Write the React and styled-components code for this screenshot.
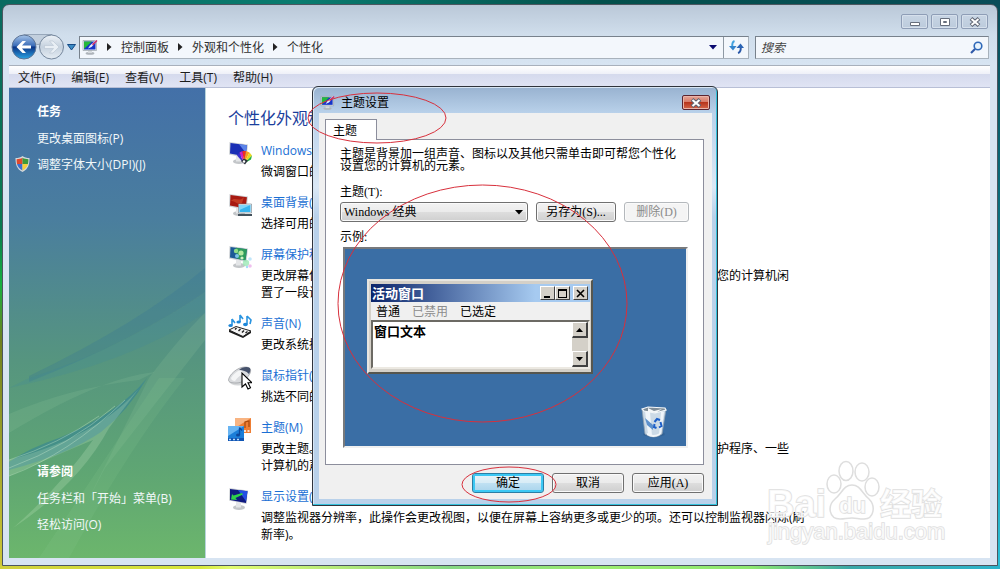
import React from 'react';
import styled, { createGlobalStyle, css } from 'styled-components';

const tasks = [
  { label: '更改桌面图标(P)' },
  { label: '调整字体大小(DPI)(J)', shield: true },
];

const related = ['任务栏和「开始」菜单(B)', '轻松访问(O)'];

const menus = ['文件(F)', '编辑(E)', '查看(V)', '工具(T)', '帮助(H)'];

const crumbs = ['控制面板', '外观和个性化', '个性化'];

const settings = [
  { icon: 'color', title: 'Windows 颜色和外观', lines: ['微调窗口的颜色和样式。'] },
  { icon: 'desktop', title: '桌面背景(B)', lines: ['选择可用的背景或颜色，或者使用自己的图片。'] },
  {
    icon: 'saver',
    title: '屏幕保护程序(S)',
    lines: [
      '更改屏幕保护程序或调整何时显示屏幕保护程序。屏幕保护程序是一幅图片或动画，当您的计算机闲',
      '置了一段设定的时间后显示。',
    ],
  },
  { icon: 'sound', title: '声音(N)', lines: ['更改系统播放的声音。'] },
  { icon: 'mouse', title: '鼠标指针(I)', lines: ['挑选不同的鼠标指针。'] },
  {
    icon: 'theme',
    title: '主题(M)',
    lines: [
      '更改主题。主题可以一次更改一系列可视和听觉元素，包括菜单、图标、背景、屏幕保护程序、一些',
      '计算机的声音和鼠标指针。',
    ],
  },
  {
    icon: 'display',
    title: '显示设置(D)',
    lines: [
      '调整监视器分辨率，此操作会更改视图，以便在屏幕上容纳更多或更少的项。还可以控制监视器闪烁(刷',
      '新率)。',
    ],
  },
];

const MonitorIcon = ({ size }) => (
  <svg width={size} height={size} viewBox="0 0 16 16" aria-hidden="true">
    <ellipse cx="8" cy="14.4" rx="4.4" ry="1.4" fill="#aeb4ba" />
    <path d="M6 11h4v3H6z" fill="#d5d9dd" />
    <path d="M1 1.5h13.5v10H1z" fill="#e9edf0" stroke="#8d959d" strokeWidth=".6" />
    <path d="M2 2.5h11.5v8H2z" fill="#1534c8" />
    <path d="M2 2.5h8L2 10z" fill="#25b83a" />
    <path d="M6 9.5l2-3 6-5.5 1 1-5.500 6z" fill="#e6eef8" />
    <path d="M10 5l4.500-4 1 1L11 6.500z" fill="#c62d6b" />
  </svg>
);

const Screen = ({ children }) => (
  <>
    <ellipse cx="11" cy="20.500" rx="6" ry="2.500" fill="#c3c6c9" />
    <path d="M8 15l5 1v4.500H8z" fill="#e4e6e8" />
    <path d="M1.500 1l18.500 2.500L18.500 17 1 13.500z" fill="#cfd3d7" />
    {children}
  </>
);

const icons = {
  color: (
    <>
      <Screen>
        <path d="M2.500 2l16.500 2.300L17.500 15.500 2 12.500z" fill="#1a2fb5" />
        <path d="M11 3.200l8 1.100-1 8z" fill="#5c84e8" />
      </Screen>
      <path d="M16 22.500l-7-8 2.500-3z" fill="#3a30d0" />
      <path d="M16 22.500l-4.500-11 3-1.500z" fill="#d020c0" />
      <path d="M16 22.500L14.500 10h3.500z" fill="#f03020" />
      <path d="M16 22.500L18 10l3.500 1.500z" fill="#f8a020" />
      <path d="M16 22.500l5.500-11 2.500 3z" fill="#e8d820" />
      <path d="M16 22.500l8-8-1 4z" fill="#20b040" />
      <path d="M13 20l3-2.500 4 2-3 4z" fill="#2e343c" />
      <circle cx="16" cy="20.500" r="1.200" fill="#fff" />
    </>
  ),
  desktop: (
    <>
      <Screen>
        <path d="M2.500 2l16.500 2.300L17.500 15.500 2 12.500z" fill="#a81a12" />
        <path d="M3 8c4-5 8 2 13-4l-2 6c-4 3-7-3-11-2z" fill="#cf4a2c" opacity=".7" />
      </Screen>
      <path d="M10.500 11h13v9h-13z" fill="#e9f3f8" stroke="#70808c" strokeWidth=".6" />
      <path d="M11.500 12h11v7h-11z" fill="#38b4ee" />
      <path d="M11.500 12h11l-11 5z" fill="#80d6fa" />
      <path d="M10 21h14v2H10z" fill="#44525c" />
    </>
  ),
  saver: (
    <>
      <Screen>
        <path d="M2.500 2l16.500 2.300L17.500 15.500 2 12.500z" fill="#1c5a96" />
        <path d="M8 2.800l11 1.500-1.500 11.200L9 13.500z" fill="#2d9a5c" />
        <circle cx="8" cy="6" r="2.200" fill="#8fdc8a" />
        <circle cx="13" cy="8" r="2.600" fill="#b5e9a1" />
        <circle cx="9" cy="11" r="2" fill="#7cc4e8" />
        <circle cx="14" cy="13" r="1.600" fill="#d2f2c4" />
      </Screen>
      <circle cx="18" cy="18" r="3.200" fill="#9be8b5" opacity=".8" />
      <circle cx="22" cy="14" r="1.800" fill="#c0e6fa" />
      <circle cx="22" cy="21" r="1.800" fill="#efbfee" />
      <circle cx="19" cy="22" r="1.200" fill="#a4dcf8" />
    </>
  ),
  sound: (
    <>
      <path d="M4 5v6M4 5l3 4M12 1v7M12 1l3 4M19 2v8M19 2l4 4-1 4" stroke="#2a94e0" strokeWidth="1.600" fill="none" />
      <ellipse cx="2.600" cy="11.500" rx="2.200" ry="1.500" fill="#1c86d8" />
      <ellipse cx="10.600" cy="8" rx="2.200" ry="1.500" fill="#1c86d8" />
      <ellipse cx="17.400" cy="10.500" rx="2.400" ry="1.700" fill="#1c86d8" />
      <path d="M1 16l7-3.500L23 17l-8 5.500z" fill="#f5f5f5" stroke="#222" />
      <path d="M1 16v2l14 6 8-5v-2l-8 5.500z" fill="#1d1d1d" />
      <path d="M7 15.500l1.500-1.500M10.500 17l2-2M14 18.500l2-2M17.500 19l2-1.500" stroke="#222" strokeWidth="1.500" />
    </>
  ),
  mouse: (
    <>
      <ellipse cx="10" cy="15" rx="9" ry="4.500" fill="#d5d7d9" />
      <path d="M.5 14C1 9 9 1 17 1c6 0 7 4 4 8-3 5-7 8-13 8-4 0-7.500-.5-7.500-3z" fill="#d9dbde" stroke="#8a8d92" strokeWidth=".6" />
      <path d="M3 12c2-4 6-7 10-8l3 4c-4 1-7 4-9 7-2 0-4-1-4-3z" fill="#f4f5f6" />
      <path d="M11 4c3-3 8-4 11-2 1 2 0 4-1 6-3-3-6-4-10-4z" fill="#46526c" />
      <path d="M14 7v14l3.500-3 2.500 5 2.500-1.200-2.500-5H24z" fill="#fff" stroke="#000" strokeWidth="1.100" />
    </>
  ),
  theme: (
    <>
      <path d="M7 0h16v15H7z" fill="#ee7e34" />
      <path d="M7 0h16L7 10z" fill="#f8b482" />
      <path d="M17 10V4l4-1v6" stroke="#a8480c" fill="none" strokeWidth="1.200" />
      <path d="M16 13h2M19.500 13h2" stroke="#fff" strokeWidth="1.400" />
      <path d="M0 8h16v15H0z" fill="#1c7ed8" />
      <path d="M0 8h16L0 18z" fill="#68b4f2" />
      <path d="M11.500 9.500V17M11.500 9.500l2.500 3" stroke="#0d479c" fill="none" strokeWidth="1.300" />
      <ellipse cx="10" cy="17" rx="2" ry="1.500" fill="#0d479c" />
      <path d="M0 20h16v3H0z" fill="#0f55b4" />
      <path d="M1 21.500h2M5 21.500h2M9 21.500h2" stroke="#bcdcfa" strokeWidth="1.400" />
    </>
  ),
  display: (
    <Screen>
      <path d="M2 2l17.500 2.300L18 16 2 13z" fill="#101a80" />
      <path d="M10 3l9.500 1.300-1.500 10z" fill="#2450e4" />
      <path d="M3 12.500l1-5.500 1.500 1.500L14 6l1 1.500-7.500 3.500 1.500 2z" fill="#2fd04a" />
    </Screen>
  ),
};

const ShieldIcon = () => (
  <svg width="15" height="16" viewBox="0 0 15 16" aria-hidden="true">
    <path d="M7.500 0c2 1.500 4 2 7 2 0 6-1 11-7 14C1.500 13 .5 8 .5 2c3 0 5-.5 7-2z" fill="#d5d9dc" />
    <path d="M7.500 1.800V8H2c-.3-1.500-.4-3-.4-4.800 2.400 0 4-.4 5.900-1.400z" fill="#e0482c" />
    <path d="M7.500 1.800V8H13c.3-1.500.4-3 .4-4.800-2.400 0-4-.4-5.900-1.400z" fill="#3d9a3a" />
    <path d="M7.500 14.600V8H2c.8 3 2.500 5 5.500 6.600z" fill="#3c6fd0" />
    <path d="M7.500 14.600V8H13c-.8 3-2.500 5-5.500 6.600z" fill="#f6cf3c" />
  </svg>
);

const NavDiscs = () => (
  <svg width="54" height="26" viewBox="0 0 54 26" aria-hidden="true">
    <defs>
      <linearGradient id="blueDisc" x1="0" y1="0" x2="0" y2="1">
        <stop offset="0" stopColor="#a6c4e8" />
        <stop offset=".45" stopColor="#3a6cb8" />
        <stop offset=".5" stopColor="#0b3486" />
        <stop offset="1" stopColor="#2aa4e4" />
      </linearGradient>
      <linearGradient id="paleDisc" x1="0" y1="0" x2="0" y2="1">
        <stop offset="0" stopColor="#eef3f8" />
        <stop offset=".5" stopColor="#c5d1de" />
        <stop offset="1" stopColor="#e6edf4" />
      </linearGradient>
    </defs>
    <path d="M13 .5h28v6q-14 8-28 0z" fill="#c2cfdd" stroke="#97a7ba" />
    <circle cx="13" cy="13" r="12" fill="url(#blueDisc)" stroke="#5e7596" />
    <path d="M5.500 13l6-6h3.500l-4 4.500h9v3h-9l4 4.500h-3.500z" fill="#fff" />
    <circle cx="40.500" cy="13" r="12" fill="url(#paleDisc)" stroke="#74869c" />
    <path d="M48 13l-6-6h-3.500l4 4.500h-9v3h9l-4 4.500H42z" fill="#e9eff5" stroke="#b9c5d2" strokeWidth=".6" />
  </svg>
);

const RecycleBin = () => (
  <svg width="26" height="32" viewBox="0 0 26 32" aria-hidden="true">
    <ellipse cx="13" cy="28" rx="11" ry="3" fill="#2c5788" opacity=".5" />
    <path d="M1 3l3 25q9 6 17 0l4-25z" fill="#ccdae6" stroke="#8ea0b0" strokeWidth=".8" />
    <path d="M4 5l3 23 4 2-2-24zM20 6l-2 23 2-1 3-22z" fill="#eff5fa" />
    <path d="M4 12l8 7v5L6 19z" fill="#5e91cc" />
    <path d="M1 3l6-2 17 1 1 2-11 3-11-2z" fill="#7f8d98" stroke="#f4f8fb" strokeWidth="1.200" />
    <path d="M7 2l6 3 8-2-6 4-8-1z" fill="#f5f7f8" />
    <path d="M13.500 16l2.500-3 3 1M19.500 16l1 4-2.500 1.500M15.500 22l-2.500-1 .5-3" stroke="#1c5fc8" strokeWidth="2" fill="none" />
    <path d="M6 27q7 4 13 0v2q-7 4-13 0z" fill="#f2f6f9" />
  </svg>
);

const Streaks = () => (
  <StreakSvg viewBox="0 0 196 470" preserveAspectRatio="none" aria-hidden="true">
    <path d="M196 180Q130 235 20 288l0 6Q130 250 196 204z" fill="#2f6f9c" opacity=".22" />
    <path d="M196 205Q110 262 20 290L0 300Q120 275 196 225z" fill="#3d86a0" opacity=".2" />
    <path d="M196 225Q170 250 140 290L70 430 96 380 196 252z" fill="#9bd0a0" opacity=".16" />
    <path d="M138 290Q110 325 50 350 20 360 0 374l0 8Q60 366 92 344 120 322 138 290z" fill="#2c7e9a" opacity=".5" />
    <path d="M138 290Q100 345 0 372l0 16Q50 366 84 352 50 400 4 440 70 396 100 340z" fill="#c8ecc4" opacity=".24" />
    <path d="M0 372Q50 356 90 328M0 380Q60 358 106 318M0 388Q60 366 116 312" stroke="#d5f0d4" opacity=".35" fill="none" />
    <path d="M0 326Q60 300 130 292L146 284Q90 290 0 345z" fill="#a5d8a8" opacity=".14" />
    <path d="M176 290Q120 360 60 470L30 470Q90 380 150 290z" fill="#8fcf98" opacity=".14" />
  </StreakSvg>
);

const Watermark = () => (
  <WatermarkSvg viewBox="0 0 182 90" role="img" aria-label="Baidu 经验">
    <g fill="#fff" fillOpacity=".75" stroke="#dedede" strokeWidth="1.500">
      <ellipse cx="68" cy="25" rx="7" ry="9" />
      <ellipse cx="80" cy="12" rx="7" ry="9.500" />
      <ellipse cx="96" cy="13" rx="7" ry="9" />
      <ellipse cx="106" cy="28" rx="7" ry="9" />
      <path d="M86 26c8 0 10 8 17 14 7 7 5 20-5 20-6 0-7-1-12-1s-7 1-12 1c-11 0-13-13-5-20 7-6 9-14 17-14z" />
      <WatermarkText x="1" y="58" $size={38}>Bai</WatermarkText>
      <WatermarkText x="73" y="54" $size={22}>du</WatermarkText>
      <WatermarkText x="114" y="56" $size={31}>经验</WatermarkText>
      <WatermarkText x="2" y="80" $size={22} $light>jingyan.baidu.com</WatermarkText>
    </g>
  </WatermarkSvg>
);

const App = () => (
  <Desktop>
    <GlobalStyle />
    <Window>
      <TitleBar>
        <FrameButton aria-label="最小化">
          <svg width="12" height="12" viewBox="0 0 12 12"><path d="M1.500 6.500h9v3h-9z" fill="#fff" stroke="#666e7c" /></svg>
        </FrameButton>
        <FrameButton aria-label="最大化">
          <svg width="12" height="12" viewBox="0 0 12 12"><path d="M1.500 2.500h9v7h-9z" fill="#fff" stroke="#666e7c" /><path d="M4.500 5.500h3v1h-3z" fill="#fff" stroke="#666e7c" /></svg>
        </FrameButton>
        <FrameButton aria-label="关闭">
          <CloseGlyph />
        </FrameButton>
      </TitleBar>

      <NavRow>
        <NavButton aria-label="后退和前进">
          <NavDiscs />
        </NavButton>
        <NavButton aria-label="最近的页面">
          <svg width="9" height="8" viewBox="0 0 9 8"><path d="M.5 1.500h8L4.500 7z" fill="#3b8bc4" stroke="#174a86" /></svg>
        </NavButton>
        <AddressBar>
          <MonitorIcon size={16} />
          {crumbs.map((crumb) => (
            <Crumb key={crumb}>
              <svg width="5" height="8" viewBox="0 0 5 8" aria-hidden="true"><path d="M0 0l4.500 4L0 8z" fill="#222" /></svg>
              <CrumbLink href="#">{crumb}</CrumbLink>
            </Crumb>
          ))}
          <AddressTools>
            <ToolButton aria-label="以前的位置">
              <svg width="8" height="5" viewBox="0 0 8 5"><path d="M0 0h8L4 4.500z" fill="#0a0a70" /></svg>
            </ToolButton>
            <ToolButton aria-label="刷新" $divided>
              <svg width="15" height="14" viewBox="0 0 15 14">
                <path d="M5.500 1Q2.500 2 3.500 8" stroke="#42a2de" strokeWidth="2" fill="none" />
                <path d="M0 6h7.500L4 10.500z" fill="#3484cc" />
                <path d="M9 13q3.500-1 2.500-7" stroke="#2a58a8" strokeWidth="2" fill="none" />
                <path d="M7.500 8H15l-3.500-4.500z" fill="#2b64b4" />
              </svg>
            </ToolButton>
          </AddressTools>
        </AddressBar>
        <SearchBox>
          <SearchInput aria-label="搜索" placeholder="搜索" />
          <svg width="13" height="13" viewBox="0 0 13 13" aria-hidden="true">
            <circle cx="8" cy="5" r="3.800" fill="#e8f3fc" stroke="#2e68b8" strokeWidth="1.600" />
            <path d="M5 8l-4 4" stroke="#2e58a8" strokeWidth="2.200" />
          </svg>
        </SearchBox>
      </NavRow>

      <Body>
        <MenuBar>
          {menus.map((menu) => (
            <MenuButton key={menu}>{menu}</MenuButton>
          ))}
        </MenuBar>
        <Columns>
          <Sidebar>
            <Streaks />
            <TaskGroup>
              <TaskHeading>任务</TaskHeading>
              {tasks.map((task) => (
                <TaskRow key={task.label}>
                  <TaskMark>{task.shield && <ShieldIcon />}</TaskMark>
                  <TaskLink href="#">{task.label}</TaskLink>
                </TaskRow>
              ))}
            </TaskGroup>
            <TaskGroup>
              <TaskHeading>请参阅</TaskHeading>
              {related.map((label) => (
                <TaskRow key={label}>
                  <TaskMark />
                  <TaskLink href="#">{label}</TaskLink>
                </TaskRow>
              ))}
            </TaskGroup>
          </Sidebar>

          <Content>
            <PageTitle>个性化外观和声音</PageTitle>
            <SettingList>
              {settings.map((item) => (
                <Setting key={item.icon}>
                  <svg width="24" height="24" viewBox="0 0 24 24" aria-hidden="true">{icons[item.icon]}</svg>
                  <SettingText>
                    <SettingLink href="#">{item.title}</SettingLink>
                    <Description>
                      {item.lines.map((line) => (
                        <Line key={line}>{line}</Line>
                      ))}
                    </Description>
                  </SettingText>
                </Setting>
              ))}
            </SettingList>
            <Watermark />
          </Content>
        </Columns>
      </Body>
    </Window>

    <Dialog role="dialog" aria-labelledby="dialog-title">
      <DialogTitleBar>
        <MonitorIcon size={15} />
        <DialogTitle id="dialog-title">主题设置</DialogTitle>
        <CloseButton aria-label="关闭">
          <CloseGlyph />
        </CloseButton>
      </DialogTitleBar>
      <DialogBody>
        <Tab>主题</Tab>
        <TabPanel>
          <Intro>
            <Line>主题是背景加一组声音、图标以及其他只需单击即可帮您个性化</Line>
            <Line>设置您的计算机的元素。</Line>
          </Intro>
          <FieldLabel htmlFor="theme">主题(T):</FieldLabel>
          <FieldRow>
            <SelectWrap>
              <ThemeSelect id="theme" defaultValue="classic">
                <option value="classic">Windows 经典</option>
              </ThemeSelect>
              <SelectArrow width="8" height="5" viewBox="0 0 8 5" aria-hidden="true">
                <path d="M0 0h8L4 4.500z" fill="#000" />
              </SelectArrow>
            </SelectWrap>
            <PushButton $width={80}>另存为(S)...</PushButton>
            <PushButton $width={65} disabled>删除(D)</PushButton>
          </FieldRow>
          <SampleLabel>示例:</SampleLabel>
          <Preview>
            <ClassicWindow>
              <ClassicTitle>
                <span>活动窗口</span>
                <ClassicButtons>
                  <ClassicButton aria-label="最小化">
                    <svg width="9" height="9" viewBox="0 0 9 9"><path d="M1 7h6v2H1z" /></svg>
                  </ClassicButton>
                  <ClassicButton aria-label="最大化">
                    <svg width="9" height="9" viewBox="0 0 9 9"><path d="M0 0h9v9H0zM1 2v6h7V2z" fillRule="evenodd" /></svg>
                  </ClassicButton>
                  <ClassicButton aria-label="关闭" $apart>
                    <svg width="9" height="9" viewBox="0 0 9 9"><path d="M1 1l7 7M8 1L1 8" stroke="#000" strokeWidth="1.600" /></svg>
                  </ClassicButton>
                </ClassicButtons>
              </ClassicTitle>
              <ClassicMenu>
                <ClassicItem>普通</ClassicItem>
                <ClassicItem $muted>已禁用</ClassicItem>
                <ClassicItem>已选定</ClassicItem>
              </ClassicMenu>
              <ClassicPane>
                <span>窗口文本</span>
                <ScrollTrack>
                  <ScrollButton aria-label="向上滚动">
                    <svg width="7" height="4" viewBox="0 0 7 4"><path d="M0 4h7L3.500 0z" /></svg>
                  </ScrollButton>
                  <ScrollButton aria-label="向下滚动">
                    <svg width="7" height="4" viewBox="0 0 7 4"><path d="M0 0h7L3.500 4z" /></svg>
                  </ScrollButton>
                </ScrollTrack>
              </ClassicPane>
            </ClassicWindow>
            <BinSpot>
              <RecycleBin />
            </BinSpot>
          </Preview>
        </TabPanel>
        <DialogActions>
          <PushButton $width={72} $primary>确定</PushButton>
          <PushButton $width={72}>取消</PushButton>
          <PushButton $width={72}>应用(A)</PushButton>
        </DialogActions>
      </DialogBody>
      <Annotations viewBox="0 0 406 420" aria-hidden="true">
        <ellipse cx="65" cy="32" rx="69" ry="25" />
        <ellipse cx="170.500" cy="217.500" rx="144.500" ry="118.500" />
        <ellipse cx="197" cy="398.500" rx="47" ry="17.500" />
      </Annotations>
    </Dialog>
  </Desktop>
);

const CloseGlyph = () => (
  <svg width="12" height="10" viewBox="0 0 12 10" aria-hidden="true">
    <path d="M2 1.500l8 7M10 1.500l-8 7" stroke="#5d6270" strokeWidth="4" />
    <path d="M2.500 2l7 6M9.500 2l-7 6" stroke="#fff" strokeWidth="2" />
  </svg>
);

// Styled-components
const GlobalStyle = createGlobalStyle`
  * {
    box-sizing: border-box;
  }
  body {
    margin: 0;
    font-family: 'Open Sans', 'Noto Sans CJK SC', sans-serif;
    font-size: 12px;
    color: #000;
  }
  button,
  input,
  select {
    font: inherit;
    color: inherit;
    margin: 0;
    padding: 0;
  }
  svg {
    display: block;
    flex-shrink: 0;
  }
  a {
    text-decoration: none;
  }
`;

const Desktop = styled.div`
  position: relative;
  display: flex;
  min-height: 100vh;
  padding: 4px 2px 3px;
  overflow: hidden;
  background:
    linear-gradient(90deg, #d0d03c, #d8e83c 20%, #e2fb70 23%, #86d884 45%, #9cec70 60%, #8fe870 75%, #3aa8a8 85%, #2cb4cc) bottom / 100% 4px no-repeat,
    linear-gradient(90deg, #0a6a60, #0a7c70 30%, #04504c 60%, #084c58) top / 100% 5px no-repeat,
    linear-gradient(#0a6a60, #0a7a50 40%, #18b040 50%, #708020 60%, #d0c838) left / 50% 100% no-repeat,
    linear-gradient(#084c58, #0a7080 40%, #2cc0d8) right / 50% 100% no-repeat;
`;

const Window = styled.div`
  flex: 1;
  display: flex;
  flex-direction: column;
  min-width: 0;
  padding: 0 7px 7px 6px;
  border: 1px solid #4c5660;
  border-radius: 7px 7px 0 0;
  background: linear-gradient(#bac8d8, #d0deec 30px, #d7e4f2 60px);
`;

const TitleBar = styled.header`
  display: flex;
  justify-content: flex-end;
  gap: 3px;
  height: 30px;
  padding: 9px 2px 0;
`;

const FrameButton = styled.button`
  display: flex;
  align-items: center;
  justify-content: center;
  width: 27px;
  height: 15px;
  border: 1px solid #8e9db6;
  border-radius: 2px;
  background: linear-gradient(#c8d5e4, #bccbdc);
  box-shadow: inset 0 0 0 1px #d6e0ec;
`;

const NavRow = styled.div`
  display: flex;
  align-items: center;
  height: 30px;
  padding: 0 1px 6px 2px;
`;

const NavButton = styled.button`
  border: 0;
  margin-right: 2px;
  background: none;
`;

const fieldBox = css`
  display: flex;
  align-items: center;
  height: 23px;
  border: 1px solid;
  border-color: #77818c #a8b2bc #a8b2bc #77818c;
  background: #f3f7fc;
`;

const AddressBar = styled.nav`
  ${fieldBox}
  flex: 3;
  margin: 0 6px 0 1px;
  padding-left: 2px;
`;

const Crumb = styled.span`
  display: flex;
  align-items: center;
  gap: 9px;
  padding-left: 9px;
`;

const CrumbLink = styled.a`
  color: #303030;
`;

const AddressTools = styled.div`
  display: flex;
  align-self: stretch;
  margin-left: auto;
`;

const ToolButton = styled.button`
  display: flex;
  align-items: center;
  justify-content: center;
  width: ${({ $divided }) => ($divided ? 25 : 20)}px;
  border: 0;
  border-left: ${({ $divided }) => ($divided ? '1px solid #8e99a4' : '0')};
  background: none;
`;

const SearchBox = styled.div`
  ${fieldBox}
  flex: 1;
  padding: 0 5px;
`;

const SearchInput = styled.input`
  flex: 1;
  min-width: 0;
  border: 0;
  outline: 0;
  background: none;
  &::placeholder {
    color: #444;
    font-style: italic;
  }
`;

const Body = styled.div`
  flex: 1;
  display: flex;
  flex-direction: column;
  background: #fff;
`;

const MenuBar = styled.div`
  display: flex;
  gap: 16px;
  height: 23px;
  padding: 0 9px;
  border-top: 1px solid #a8b0bc;
  border-bottom: 1px solid #b8bfd6;
  background: linear-gradient(#fff, #eef0f8 38%, #d5daed 40%, #e0e4f4);
`;

const MenuButton = styled.button`
  border: 0;
  background: none;
  color: #1c1c1c;
`;

const Columns = styled.div`
  flex: 1;
  display: flex;
`;

const Sidebar = styled.aside`
  position: relative;
  display: flex;
  flex-direction: column;
  justify-content: space-between;
  width: 197px;
  flex-shrink: 0;
  padding: 11px 0 21px;
  border-right: 1px solid #b8d4dc;
  background: linear-gradient(#4370a8, #4a7e9e 28%, #56957f 58%, #5fa673 82%, #6cb66c);
`;

const StreakSvg = styled.svg`
  position: absolute;
  inset: 0;
  width: 100%;
  height: 100%;
`;

const TaskGroup = styled.section`
  position: relative;
  display: flex;
  flex-direction: column;
`;

const TaskHeading = styled.h2`
  margin: 0;
  padding-left: 28px;
  font-size: 12px;
  line-height: 26px;
  color: #fff;
`;

const TaskRow = styled.div`
  display: flex;
  align-items: center;
  height: 26px;
`;

const TaskMark = styled.span`
  width: 28px;
  padding-left: 6px;
`;

const TaskLink = styled.a`
  color: #f2f8fa;
`;

const Content = styled.main`
  position: relative;
  flex: 1;
  min-width: 0;
  padding: 18px 22px 12px;
`;

const PageTitle = styled.h1`
  margin: 0 0 11px;
  font-size: 16px;
  font-weight: 400;
  line-height: 24px;
  color: #1a3e9c;
`;

const SettingList = styled.div`
  display: flex;
  flex-direction: column;
  gap: 13px;
`;

const Setting = styled.div`
  display: flex;
  gap: 9px;
`;

const SettingText = styled.div`
  display: flex;
  flex-direction: column;
  gap: 3px;
  line-height: 17px;
`;

const SettingLink = styled.a`
  line-height: 19px;
  color: #1a6fd4;
`;

const Description = styled.p`
  margin: 0;
`;

const Line = styled.span`
  display: block;
  white-space: nowrap;
`;

const WatermarkSvg = styled.svg`
  position: absolute;
  right: 42px;
  bottom: 9px;
  width: 182px;
  height: 90px;
`;

const WatermarkText = styled.text`
  font-family: 'Liberation Sans', 'Noto Sans CJK SC', sans-serif;
  font-size: ${({ $size }) => $size}px;
  font-weight: ${({ $light }) => ($light ? 400 : 700)};
  paint-order: stroke;
`;

const Dialog = styled.section`
  position: absolute;
  top: 86px;
  left: 312px;
  width: 406px;
  padding: 1px 5px 6px 6px;
  border: 1px solid #30343c;
  border-radius: 6px 6px 0 0;
  background: linear-gradient(#98b2d0, #b9d1ea 26px, #dbe8f6 100px, #b9d1ea 130px);
  box-shadow: inset -1px -1px 0 #34c2dc, inset 1px 1px 0 #d8e6f4;
`;

const DialogTitleBar = styled.header`
  display: flex;
  align-items: center;
  gap: 6px;
  height: 25px;
  padding: 4px 2px 0 1px;
`;

const DialogTitle = styled.h2`
  flex: 1;
  margin: 0;
  font-size: 12px;
  font-weight: 400;
  line-height: 16px;
`;

const CloseButton = styled(FrameButton)`
  width: 28px;
  align-self: center;
  border-color: #5c2430;
  background: linear-gradient(#e6a698, #d87a68 45%, #b8341c 50%, #d4664a);
  box-shadow: inset 0 0 0 1px #eab4a8;
`;

const DialogBody = styled.div`
  padding: 6px 8px 6px 6px;
  background: #f0f0f0;
  font-family: 'Liberation Serif', 'Noto Sans CJK SC', serif;
`;

const Tab = styled.button`
  position: relative;
  display: block;
  width: 52px;
  height: 21px;
  margin-bottom: -1px;
  border: 1px solid #8c8e9c;
  border-bottom: 0;
  background: #fff;
  padding: 0 12px 1px 0;
`;

const TabPanel = styled.div`
  padding: 8px 14px 16px;
  border: 1px solid #8c8e9c;
  background: #fff;
`;

const Intro = styled.p`
  margin: 0 0 12px;
  line-height: 12px;
`;

const FieldLabel = styled.label`
  display: block;
  line-height: 16px;
  margin-bottom: 2px;
`;

const FieldRow = styled.div`
  display: flex;
  gap: 8px;
`;

const SelectWrap = styled.div`
  position: relative;
  flex: 1;
`;

const buttonFace = css`
  border: 1px solid #707070;
  border-radius: 3px;
  background: linear-gradient(#f2f2f2, #ebebeb 48%, #dddddd 52%, #cfcfcf);
  box-shadow: inset 0 0 0 1px #fafafa;
`;

const ThemeSelect = styled.select`
  ${buttonFace}
  appearance: none;
  display: block;
  width: 100%;
  height: 20px;
  padding: 0 20px 0 3px;
`;

const SelectArrow = styled.svg`
  position: absolute;
  top: 8px;
  right: 5px;
  pointer-events: none;
`;

const PushButton = styled.button`
  ${buttonFace}
  width: ${({ $width }) => $width}px;
  height: 20px;
  line-height: 16px;
  ${({ $primary }) =>
    $primary &&
    css`
      border-color: #2c7ea4;
      background: linear-gradient(#e8f4fa, #d8ecf6 48%, #bfe0f2 52%, #a8d4ec);
      box-shadow: inset 0 0 0 2px #3cc8f4;
    `}
  &:disabled {
    border-color: #b4b8bc;
    background: #f4f4f4;
    color: #8a8a8a;
  }
`;

const SampleLabel = styled.p`
  margin: 7px 0 2px;
  line-height: 16px;
`;

const Preview = styled.div`
  display: flex;
  justify-content: space-between;
  height: 201px;
  margin: 0 1px 0 3px;
  padding: 30px 19px 8px 22px;
  border: 2px solid;
  border-color: #77797c #f0f0f0 #f0f0f0 #77797c;
  background: #3a6ea5;
`;

const ClassicWindow = styled.div`
  width: 226px;
  height: 95px;
  padding: 3px 1px 3px 2px;
  border: 2px solid;
  border-color: #e8e6e0 #56564e #56564e #e8e6e0;
  background: #d4d0c8;
  font-family: 'Noto Sans CJK SC', sans-serif;
`;

const ClassicTitle = styled.div`
  display: flex;
  align-items: center;
  justify-content: space-between;
  height: 18px;
  padding: 0 2px 0 1px;
  background: linear-gradient(90deg, #0a246a, #a6caf0 75%);
  color: #fff;
  font-size: 13px;
  font-weight: 700;
  line-height: 18px;
`;

const ClassicButtons = styled.div`
  display: flex;
`;

const ClassicButton = styled.button`
  display: flex;
  align-items: center;
  justify-content: center;
  width: 15px;
  height: 14px;
  margin-left: ${({ $apart }) => ($apart ? 3 : 0)}px;
  border: 1px solid;
  border-color: #fff #404040 #404040 #fff;
  background: #d4d0c8;
`;

const ClassicMenu = styled.div`
  display: flex;
  gap: 12px;
  padding: 0 5px;
  background: #f0f0f0;
  line-height: 18px;
`;

const ClassicItem = styled.span`
  color: ${({ $muted }) => ($muted ? '#8c8c8c' : '#000')};
`;

const ClassicPane = styled.div`
  display: flex;
  justify-content: space-between;
  height: 49px;
  padding-left: 1px;
  border: 2px solid;
  border-color: #6c6a64 #ece9e2 #ece9e2 #6c6a64;
  background: #fff;
  font-size: 13px;
  font-weight: 700;
  line-height: 18px;
`;

const ScrollTrack = styled.div`
  display: flex;
  flex-direction: column;
  justify-content: space-between;
  background: #d4d0c8;
`;

const ScrollButton = styled(ClassicButton)`
  width: 16px;
  height: 16px;
  border-width: 1px 2px 2px 1px;
`;

const BinSpot = styled.div`
  align-self: flex-end;
`;

const DialogActions = styled.div`
  display: flex;
  justify-content: flex-end;
  gap: 8px;
  padding-top: 8px;
`;

const Annotations = styled.svg`
  position: absolute;
  top: -1px;
  left: -1px;
  width: 406px;
  height: 420px;
  overflow: visible;
  pointer-events: none;
  fill: none;
  stroke: #d8303c;
`;

export default App;
